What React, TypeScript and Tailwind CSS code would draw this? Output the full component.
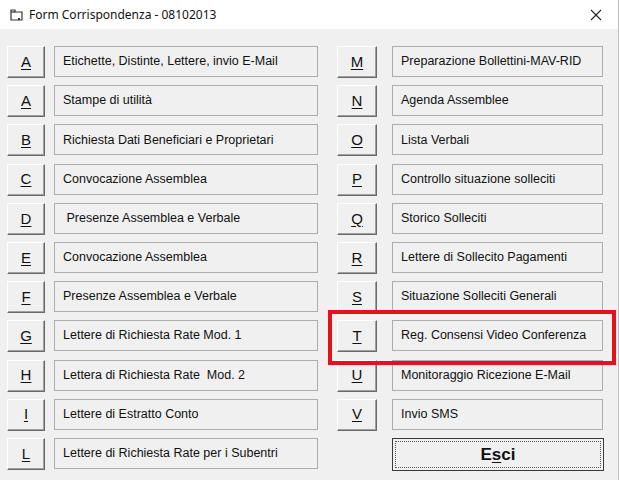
import React from 'react';

type Row = { key: string; label: string };

const leftRows: Row[] = [
  { key: 'A', label: 'Etichette, Distinte, Lettere, invio E-Mail' },
  { key: 'A', label: 'Stampe di utilità' },
  { key: 'B', label: 'Richiesta Dati Beneficiari e Proprietari' },
  { key: 'C', label: 'Convocazione Assemblea' },
  { key: 'D', label: '\u00a0Presenze Assemblea e Verbale' },
  { key: 'E', label: 'Convocazione Assemblea' },
  { key: 'F', label: 'Presenze Assemblea e Verbale' },
  { key: 'G', label: 'Lettere di Richiesta Rate Mod. 1' },
  { key: 'H', label: 'Lettera di Richiesta Rate\u00a0 Mod. 2' },
  { key: 'I', label: 'Lettere di Estratto Conto' },
  { key: 'L', label: 'Lettere di Richiesta Rate per i Subentri' },
];

const rightRows: Row[] = [
  { key: 'M', label: 'Preparazione Bollettini-MAV-RID' },
  { key: 'N', label: 'Agenda Assemblee' },
  { key: 'O', label: 'Lista Verbali' },
  { key: 'P', label: 'Controllo situazione solleciti' },
  { key: 'Q', label: 'Storico Solleciti' },
  { key: 'R', label: 'Lettere di Sollecito Pagamenti' },
  { key: 'S', label: 'Situazione Solleciti Generali' },
  { key: 'T', label: 'Reg. Consensi Video Conferenza' },
  { key: 'U', label: 'Monitoraggio Ricezione E-Mail' },
  { key: 'V', label: 'Invio SMS' },
];

const font = { fontFamily: '"Liberation Sans", Arial, sans-serif' };

// classic raised win32 button
const KeyButton = ({ letter, wide }: { letter: string; wide?: boolean }) => (
  <button
    className={`${wide ? 'w-[40px]' : 'w-[38px]'} h-[32px] shrink-0 bg-[#f0f0f0] border border-t-white border-l-white border-r-[#696969] border-b-[#696969] shadow-[inset_-1px_-1px_0_#a0a0a0] flex items-center justify-center text-[15px] text-[#111] underline underline-offset-2`}
  >
    {letter}
  </button>
);

const LabelBox = ({ text, w }: { text: string; w: string }) => (
  <div className={`${w} h-[31px] bg-[#f0f0f0] border border-[#adadad] flex items-center pl-[8px] text-[12.5px] text-[#111] whitespace-pre`}>
    {text}
  </div>
);

export default function App() {
  return (
    <div className="w-[619px] h-[480px] bg-[#f0f0f0] flex flex-col border-r border-[#bdbdbd] overflow-hidden" style={font}>
      {/* Title bar */}
      <div className="h-[29px] bg-white flex items-center shrink-0">
        <svg width="16" height="16" viewBox="0 0 16 16" className="ml-[9px] mr-[4px]">
          <path d="M2 3 L6 3 L6 5 L13 5 L13 13 L2 13 Z" fill="none" stroke="#333" strokeWidth="1.2" />
          <path d="M2 5 L6 5" stroke="#333" strokeWidth="1.2" />
          <rect x="9" y="11" width="2" height="2" fill="#333" />
        </svg>
        <span className="text-[12px] text-[#111]" style={{ fontFamily: '"Noto Sans", "Open Sans", sans-serif' }}>
          Form Corrispondenza - 08102013
        </span>
        <div className="ml-auto mr-[14px] w-[16px] h-[16px] flex items-center justify-center">
          <svg width="12" height="12" viewBox="0 0 12 12">
            <path d="M1 1 L11 11 M11 1 L1 11" stroke="#222" strokeWidth="1.1" />
          </svg>
        </div>
      </div>

      <div className="flex pt-[17px]">
        {/* Left column */}
        <div className="flex flex-col gap-[7.2px] pl-[7px]">
          {leftRows.map((r, i) => (
            <div key={i} className="flex items-start gap-[9px]">
              <KeyButton letter={r.key} />
              <LabelBox text={r.label} w="w-[264px]" />
            </div>
          ))}
        </div>

        {/* Right column */}
        <div className="flex flex-col gap-[7.2px] pl-[19px]">
          {rightRows.map((r, i) => (
            <div key={i} className="relative flex items-start gap-[15px]">
              <KeyButton letter={r.key} wide />
              <LabelBox text={r.label} w="w-[211px]" />
              {r.key === 'T' && (
                <div className="absolute z-10 left-[-9px] top-[-10px] w-[288px] h-[55px] border-[4px] border-[#e3121d] pointer-events-none" />
              )}
            </div>
          ))}
          <div className="flex">
            <div className="ml-[55px] w-[212px] h-[33px] border border-[#3a3a3a] bg-[#f0f0f0] p-[2px]">
              <div className="w-full h-full border border-dotted border-[#555] flex items-center justify-center text-[17px] font-bold text-[#111]">
                E<span className="underline underline-offset-2">s</span>ci
              </div>
            </div>
          </div>
        </div>
      </div>
    </div>
  );
}
